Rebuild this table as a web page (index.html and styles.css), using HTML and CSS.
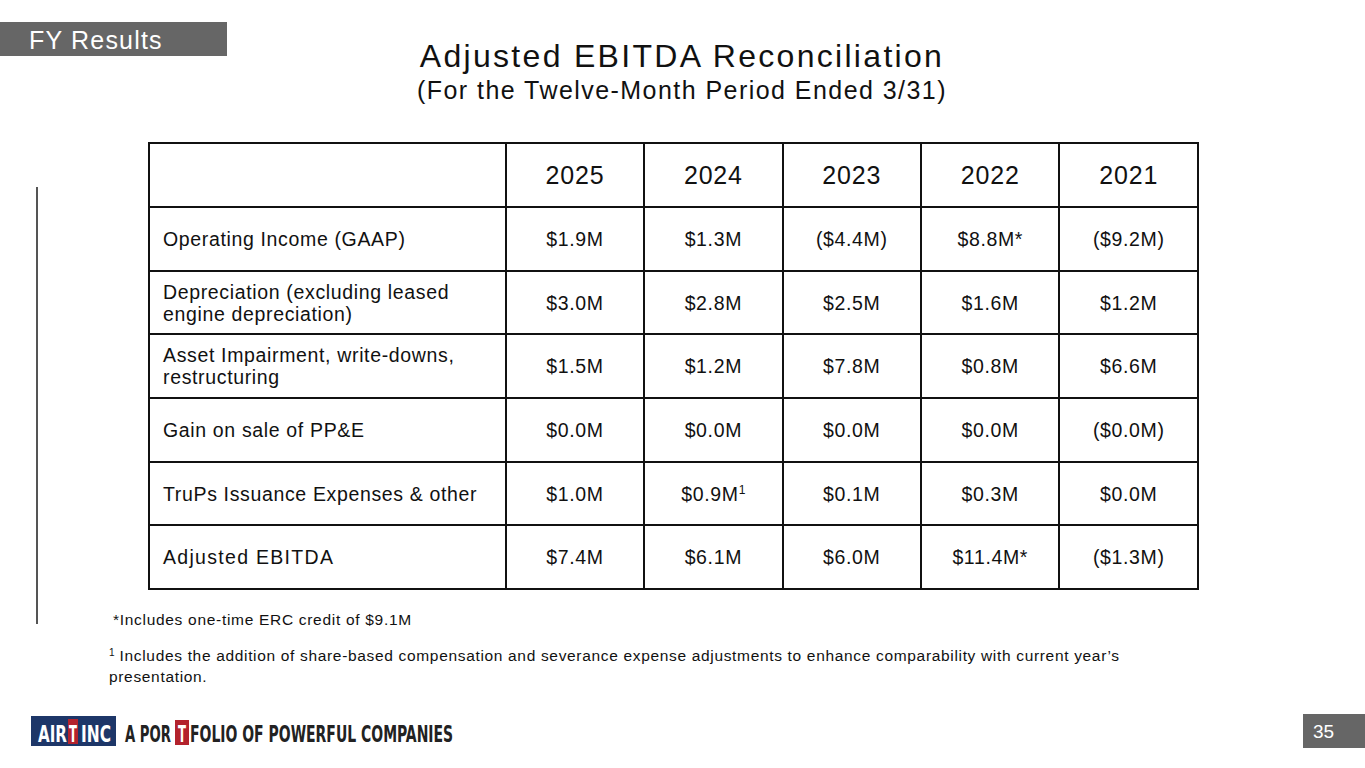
FILE: index.html
```html
<!DOCTYPE html>
<html>
<head>
<meta charset="utf-8">
<link rel="stylesheet" href="styles.css">
</head>
<body>
<div class="slide">
  <div class="top">
    <div class="tab">FY Results</div>
    <div class="titles">
      <h1 class="title">Adjusted EBITDA Reconciliation</h1>
      <div class="subtitle">(For the Twelve-Month Period Ended 3/31)</div>
    </div>
  </div>
  <div class="middle">
    <div class="rule"></div>
    <div class="content">
      <table class="recon">
        <thead>
          <tr><th class="label"></th><th>2025</th><th>2024</th><th>2023</th><th>2022</th><th>2021</th></tr>
        </thead>
        <tbody>
          <tr><td class="label">Operating Income (GAAP)</td><td>$1.9M</td><td>$1.3M</td><td>($4.4M)</td><td>$8.8M*</td><td>($9.2M)</td></tr>
          <tr><td class="label">Depreciation (excluding leased<br>engine depreciation)</td><td>$3.0M</td><td>$2.8M</td><td>$2.5M</td><td>$1.6M</td><td>$1.2M</td></tr>
          <tr><td class="label">Asset Impairment, write-downs,<br>restructuring</td><td>$1.5M</td><td>$1.2M</td><td>$7.8M</td><td>$0.8M</td><td>$6.6M</td></tr>
          <tr><td class="label">Gain on sale of PP&amp;E</td><td>$0.0M</td><td>$0.0M</td><td>$0.0M</td><td>$0.0M</td><td>($0.0M)</td></tr>
          <tr><td class="label">TruPs Issuance Expenses &amp; other</td><td>$1.0M</td><td>$0.9M<sup>1</sup></td><td>$0.1M</td><td>$0.3M</td><td>$0.0M</td></tr>
          <tr><td class="label wide">Adjusted EBITDA</td><td>$7.4M</td><td>$6.1M</td><td>$6.0M</td><td>$11.4M*</td><td>($1.3M)</td></tr>
        </tbody>
      </table>
      <p class="note1">*Includes one-time ERC credit of $9.1M</p>
      <p class="note2"><sup>1</sup><span class="gap">Includes the addition of share-based compensation and severance expense adjustments to enhance comparability with current year’s</span><br><span>presentation.</span></p>
    </div>
  </div>
  <div class="bottom">
    <svg class="logo" width="430" height="34" viewBox="0 0 430 34" xmlns="http://www.w3.org/2000/svg">
      <rect x="0" y="2" width="85" height="30" fill="#1d3668"/>
      <rect x="37" y="5" width="10" height="25" fill="#b3232d"/>
      <rect x="144" y="6" width="14" height="25" fill="#b3232d"/>
      <text transform="translate(7 28) scale(0.73 1)" x="0" y="0" class="lt light" textLength="39.7" lengthAdjust="spacingAndGlyphs">AIR</text>
      <text transform="translate(38 28) scale(0.57 1)" x="0" y="0" class="lt light" textLength="14" lengthAdjust="spacingAndGlyphs">T</text>
      <text transform="translate(50 28) scale(0.746 1)" x="0" y="0" class="lt light" textLength="40.2" lengthAdjust="spacingAndGlyphs">INC</text>
      <text transform="translate(94 28) scale(0.64 1)" x="0" y="0" class="lt dark" textLength="71.9" lengthAdjust="spacingAndGlyphs">A POR</text>
      <text transform="translate(147 28) scale(0.57 1)" x="0" y="0" class="lt light" textLength="14" lengthAdjust="spacingAndGlyphs">T</text>
      <text transform="translate(159 28) scale(0.68 1)" x="0" y="0" class="lt dark" textLength="387" lengthAdjust="spacingAndGlyphs">FOLIO OF POWERFUL COMPANIES</text>
    </svg>
    <div class="page">35</div>
  </div>
</div>
</body>
</html>
```

FILE: styles.css
```css
* { box-sizing: border-box; }
html, body { margin: 0; padding: 0; background: #fff; }
body { font-family: "Liberation Sans", Arial, sans-serif; color: #111; }
.slide { width: 1365px; height: 768px; display: flex; flex-direction: column; overflow: hidden; }
.top { display: flex; height: 120px; padding-top: 22px; }
.tab {
  width: 227px; height: 34px; background: #666; color: #fff; flex: none;
  font-size: 25px; line-height: 36px; padding-left: 29px; letter-spacing: 1.2px;
}
.titles { flex: none; width: 910px; text-align: center; padding-top: 16px; }
.title { margin: 0; font-weight: normal; font-size: 32px; line-height: 36px; letter-spacing: 2.3px; color: #111; }
.subtitle { font-size: 25px; line-height: 30px; letter-spacing: 1.45px; color: #111; margin-top: 1px; }
.middle { display: flex; height: 572px; }
.rule { width: 2px; height: 437px; background: #555; margin-left: 36px; margin-top: 67px; flex: none; }
.content { padding-left: 110px; padding-top: 22px; }
.recon { border-collapse: collapse; width: 1051px; }
.recon th, .recon td { border: 2px solid #111; text-align: center; padding: 0; }
.recon th { height: 64px; font-size: 25px; font-weight: normal; width: 139px; letter-spacing: 0.8px; }
.recon th.label { width: 357px; }
.recon td { height: 63.7px; font-size: 19.5px; line-height: 22px; letter-spacing: 0.65px; }
.recon td.label { text-align: left; padding-left: 13px; padding-right: 6px; white-space: nowrap; }
.recon td.wide { letter-spacing: 1.3px; }
sup { font-size: 12px; vertical-align: 0; position: relative; top: -7px; letter-spacing: 0; line-height: 1; }
.note1 { margin: 20px 0 0 -35px; font-size: 15.5px; line-height: 20px; letter-spacing: 0.7px; }
.note2 { margin: 15px 0 0 -39px; font-size: 15.5px; line-height: 21px; width: 1060px; letter-spacing: 0.67px; }
.note2 sup { font-size: 10px; top: -5px; }
.note2 .gap { margin-left: 5px; }
.bottom { display: flex; justify-content: space-between; align-items: flex-start; flex: 1; padding-top: 22px; }
.logo { display: block; margin-left: 31px; }
.lt { font-family: "DejaVu Sans Condensed", "Liberation Sans", sans-serif; font-weight: bold; font-size: 23px; }
.light { fill: #fff; }
.dark { fill: #222; }
.page { width: 62px; height: 34px; background: #666; color: #fff; font-size: 19px; line-height: 36px; padding-left: 10px; }
```
